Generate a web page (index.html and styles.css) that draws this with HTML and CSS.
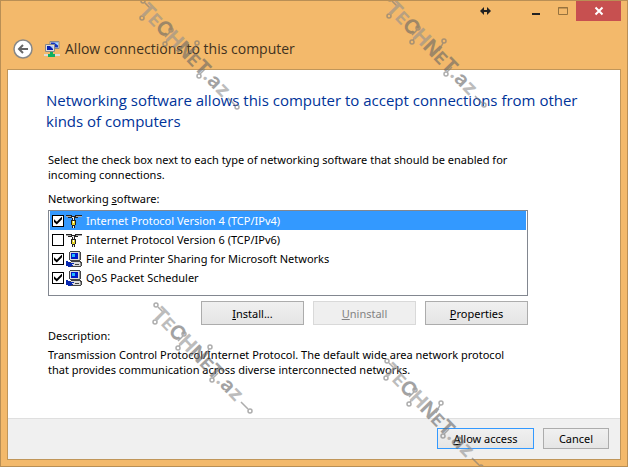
FILE: index.html
```html
<!DOCTYPE html>
<html lang="en">
<head>
  <meta charset="utf-8">
  <title>Allow connections to this computer</title>
  <link rel="stylesheet" href="styles.css">
</head>
<body>
  <svg class="defs" aria-hidden="true">
    <symbol id="protocol" viewBox="0 0 16 16" shape-rendering="crispEdges">
      <path d="M0 2h6v1H0zM9 2h7v1H9z" fill="#222"/>
      <path d="M0 3h5v1H0zM10 3h6v1h-6z" fill="#aaa"/>
      <path d="M2 4h3v1H2zM9 4h3v1H9zM5 3h5v2H9v2H6V5H5zM5 7h5v5H9v3H6v-3H5z" fill="#222"/>
      <path d="M6 4h2v1H6zM7 5h1v2H7zM7 13h1v2H7z" fill="#eee"/>
      <path d="M6 8h3v4H6z" fill="#e6d428"/>
      <path d="M7 8h1v2H7z" fill="#fff"/>
    </symbol>
    <symbol id="client" viewBox="0 0 16 16" shape-rendering="crispEdges">
      <path d="M4 0h10v1h1v8h-1v1h1v1h1v4h-1v1H4v-5h1v-1H4V9H3V1h1z" fill="#444"/>
      <path d="M4 1h9v8H4zM5 11h9v4H5z" fill="#dcdcdc"/>
      <path d="M5 2h7v6H5z" fill="#0018c8"/>
      <path d="M6 3h3v3H6z" fill="#20b8ff"/>
      <path d="M13 1h1v8h-1zM14 12h1v3h-1z" fill="#999"/>
      <path d="M9 13h4v1H9z" fill="#444"/>
      <path d="M0 10h2v1h2v1h4v1H6v1h1v1H5v1H2v-1H0z" fill="#0828b0"/>
    </symbol>
    <!-- circuit traces round the watermark letters -->
    <symbol id="traces" viewBox="0 0 110 120">
      <g fill="none" stroke="#777" stroke-width="1.5">
        <circle cx="8" cy="7" r="2"/>
        <circle cx="7" cy="24" r="2"/>
        <circle cx="36" cy="36" r="2"/>
        <circle cx="30" cy="50" r="2"/>
        <circle cx="62" cy="49" r="2"/>
        <circle cx="64" cy="82" r="2"/>
        <circle cx="102" cy="113" r="2"/>
        <path d="m10 9 5 5M9 22l4-5M35 38l-5 5M31 48l4-5M61 51l-4 8M65 80l5-5M100 111l-7-7"/>
      </g>
    </symbol>
  </svg>

  <div class="window">
    <header class="titlebar">
      <div class="controls">
        <svg class="resize" viewBox="0 0 11 8"><path d="M0 4l4-4v3h3V0l4 4-4 4V5H4v3z" fill="#222"/></svg>
        <button class="control" aria-label="Minimize"><svg viewBox="0 0 10 10"><path d="M1 7h8v2H1z" fill="#222"/></svg></button>
        <button class="control" aria-label="Maximize" disabled><svg viewBox="0 0 10 10"><path d="M.5 1.500h9v7h-9zM0 2h10" stroke="#96733f" fill="none"/></svg></button>
        <button class="control close" aria-label="Close"><svg viewBox="0 0 10 10"><path d="m1.500 1.500 7 7m0-7-7 7" stroke="#fff" stroke-width="2" fill="none"/></svg></button>
      </div>
      <div class="heading">
        <button class="back" aria-label="Back"><svg viewBox="0 0 20 20"><circle cx="10" cy="10" r="9" fill="#fff" stroke="#888" stroke-width="1.500"/><path d="M15 10H6m4-4-4 4 4 4" stroke="#666" stroke-width="2" fill="none"/></svg></button>
        <svg class="app-icon" viewBox="0 0 16 16">
          <path d="M6 .5h9v7H6z" fill="#ddd" stroke="#888"/>
          <path d="M7 1.500h7v5H7z" fill="#1030c0"/>
          <path d="M10 1.500h4v3z" fill="#a8d8ff"/>
          <path d="M1.500 3.500h9v7h-9z" fill="#ddd" stroke="#888"/>
          <path d="M3 5h6v4H3z" fill="#0820b0"/>
          <path d="M6 5h3v3z" fill="#a8c8ff"/>
          <path d="M0 13h16v2H0z" fill="#ddd"/>
          <path d="M6 11h3v2h2v3H4v-3h2z" fill="#10b060"/>
        </svg>
        <h1>Allow connections to this computer</h1>
      </div>
    </header>

    <main class="panel">
      <div class="content">
        <h2>Networking software allows this computer to accept connections from other kinds of computers</h2>
        <div class="details">
          <p class="intro">Select the check box next to each type of networking software that should be enabled for<br>incoming connections.</p>
          <p class="list-label" id="list-label">Networking <u>s</u>oftware:</p>
          <div class="list" role="group" aria-labelledby="list-label">
            <label class="item selected"><input type="checkbox" checked><svg><use href="#protocol"/></svg><span>Internet Protocol Version 4 (TCP/IPv4)</span></label>
            <label class="item"><input type="checkbox"><svg><use href="#protocol"/></svg><span>Internet Protocol Version 6 (TCP/IPv6)</span></label>
            <label class="item"><input type="checkbox" checked><svg><use href="#client"/></svg><span>File and Printer Sharing for Microsoft Networks</span></label>
            <label class="item"><input type="checkbox" checked><svg><use href="#client"/></svg><span>QoS Packet Scheduler</span></label>
          </div>
          <div class="actions">
            <button class="btn"><u>I</u>nstall...</button>
            <button class="btn" disabled><u>U</u>ninstall</button>
            <button class="btn"><u>P</u>roperties</button>
          </div>
          <p class="description-label">Description:</p>
          <p class="description">Transmission Control Protocol/Internet Protocol. The default wide area network protocol<br>that provides communication across diverse interconnected networks.</p>
        </div>
      </div>
      <footer class="footer">
        <button class="btn primary"><u>A</u>llow access</button>
        <button class="btn cancel">Cancel</button>
      </footer>
    </main>

    <div class="watermarks">
      <svg class="mark mark-1"><use href="#traces"/><text transform="translate(3 17) rotate(46)"><tspan class="pale">T<tspan class="small">E</tspan></tspan>C<tspan class="pale">H</tspan>N<tspan class="small">E</tspan>T<tspan class="pale">.</tspan>a<tspan class="pale">z</tspan></text></svg>
      <svg class="mark mark-2"><use href="#traces"/><text transform="translate(3 17) rotate(46)"><tspan class="pale">T<tspan class="small">E</tspan></tspan>C<tspan class="pale">H</tspan>N<tspan class="small">E</tspan>T<tspan class="pale">.</tspan>a<tspan class="pale">z</tspan></text></svg>
      <svg class="mark mark-3"><use href="#traces"/><text transform="translate(3 17) rotate(46)"><tspan class="pale">T<tspan class="small">E</tspan></tspan>C<tspan class="pale">H</tspan>N<tspan class="small">E</tspan>T<tspan class="pale">.</tspan>a<tspan class="pale">z</tspan></text></svg>
      <svg class="mark mark-4"><use href="#traces"/><text transform="translate(3 17) rotate(46)"><tspan class="pale">T<tspan class="small">E</tspan></tspan>C<tspan class="pale">H</tspan>N<tspan class="small">E</tspan>T<tspan class="pale">.</tspan>a<tspan class="pale">z</tspan></text></svg>
    </div>
  </div>
</body>
</html>
```
FILE: styles.css
```css
* {
  box-sizing: border-box;
}

body {
  margin: 0;
  font: 12px/15px "Open Sans", sans-serif;
  color: #000;
}

h1, h2, p {
  margin: 0;
  font-weight: normal;
}

button {
  padding: 0;
  border: none;
  background: none;
  font: inherit;
  color: inherit;
}

.defs {
  position: absolute;
  width: 0;
  height: 0;
}

.window {
  position: relative;
  display: flex;
  flex-direction: column;
  min-height: 100vh;
  padding: 0 6px 6px;
  border: 1px solid #b98f55;
  background: #f3b96b;
}

.controls {
  display: flex;
  justify-content: flex-end;
  align-items: center;
  height: 20px;
}

.resize {
  width: 11px;
  height: 8px;
  margin-right: 31px;
}

.control {
  display: flex;
  justify-content: center;
  align-items: center;
  width: 27px;
  height: 20px;
}

.control svg {
  width: 10px;
  height: 10px;
}

.close {
  width: 45px;
  background: #c75050;
}

.heading {
  display: flex;
  align-items: center;
  height: 48px;
  padding: 7px 6px 0;
}

.back,
.back svg {
  display: block;
  width: 20px;
  height: 20px;
}

.app-icon {
  width: 16px;
  height: 16px;
  margin: 0 5px 0 11px;
}

h1 {
  font-size: 14px;
  line-height: 20px;
  color: #3f321f;
}

.panel {
  flex: 1;
  display: flex;
  flex-direction: column;
  border: 1px solid #c0965a;
  background: #fff;
}

.content {
  flex: 1;
  padding: 20px 38px 0;
}

h2 {
  font-size: 15px;
  line-height: 21px;
  color: #003399;
}

.details {
  max-width: 482px;
  padding-left: 2px;
  font-family: "Noto Sans", sans-serif;
  font-size: 11px;
}

.intro {
  margin-top: 20px;
}

.list-label {
  margin-top: 9px;
}

.list {
  height: 86px;
  margin-top: 4px;
  padding: 0 1px;
  border: 1px solid #828790;
}

.item {
  display: flex;
  align-items: center;
  height: 19px;
  padding-left: 2px;
}

.item svg {
  width: 16px;
  height: 16px;
  margin: 0 4px 0 2px;
}

.selected {
  background: #3399ff;
  color: #fff;
}

.item input {
  appearance: none;
  display: grid;
  place-items: center;
  width: 12px;
  height: 12px;
  margin: 0;
  border: 1px solid #000;
  background: #fff;
}

.item input:checked::before {
  content: "";
  width: 8px;
  height: 8px;
  background: #000;
  clip-path: polygon(0 35%, 35% 65%, 100% 0, 100% 35%, 35% 100%, 0 70%);
}

.actions {
  display: flex;
  justify-content: flex-end;
  gap: 9px;
  margin-top: 5px;
}

.btn {
  width: 103px;
  height: 24px;
  border: 1px solid #acacac;
  background: linear-gradient(#f0f0f0, #e5e5e5);
  font-family: "Noto Sans", sans-serif;
  font-size: 11px;
}

.btn:disabled {
  border-color: #d9d9d9;
  background: #efefef;
  color: #838383;
}

.description-label {
  margin-top: 3px;
}

.description {
  margin-top: 4px;
}

.footer {
  display: flex;
  justify-content: flex-end;
  gap: 9px;
  padding: 9px 11px 10px;
  border-top: 1px solid #dfdfdf;
  background: #f0f0f0;
}

.footer .btn {
  width: 97px;
  height: 21px;
}

.footer .primary {
  border-color: #3399ff;
}

.footer .cancel {
  width: 66px;
}

.watermarks {
  position: absolute;
  inset: 0;
  overflow: hidden;
  pointer-events: none;
}

.mark {
  position: absolute;
  width: 110px;
  height: 120px;
  opacity: 0.6;
  font: 700 20px Inter, sans-serif;
  fill: #666;
}

.mark .pale {
  fill: #909090;
}

.mark .small {
  font-size: 17px;
}

.mark-1 { left: 134px; top: -7px; }
.mark-2 { left: 381px; top: -9px; }
.mark-3 { left: 147px; top: 297px; }
.mark-4 { left: 378px; top: 353px; }
```
